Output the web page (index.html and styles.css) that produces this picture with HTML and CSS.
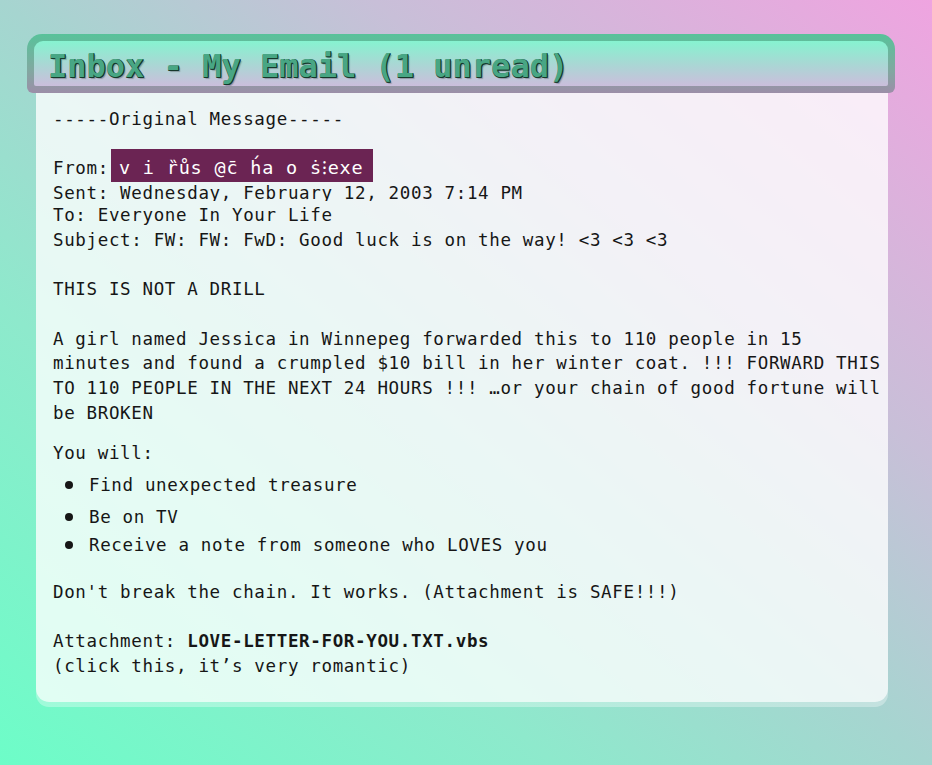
FILE: index.html
```html
<!DOCTYPE html>
<html lang="en">
<head>
<meta charset="utf-8">
<title>Inbox - My Email</title>
<link rel="stylesheet" href="styles.css">
</head>
<body>
<div class="window">
  <div class="titlebar">
    <div class="titlebar-inner">
      <h1 class="title">Inbox - My Email (1 unread)</h1>
    </div>
  </div>
  <div class="panel">
    <div class="line">-----Original Message-----</div>
    <div class="line blank"></div>
    <div class="line">From:<span class="sender">v i ȑůs @c̄ h́a o ṡ⁝exe</span></div>
    <div class="line sent">Sent: Wednesday, February 12, 2003 7:14 PM</div>
    <div class="line">To: Everyone In Your Life</div>
    <div class="line">Subject: FW: FW: FwD: Good luck is on the way! &lt;3 &lt;3 &lt;3</div>
    <div class="line blank"></div>
    <div class="line">THIS IS NOT A DRILL</div>
    <div class="line blank"></div>
    <p class="para">A girl named Jessica in Winnepeg forwarded this to 110 people in 15 minutes and found a crumpled $10 bill in her winter coat. !!! FORWARD THIS TO 110 PEOPLE IN THE NEXT 24 HOURS !!! …or your chain of good fortune will be BROKEN</p>
    <p class="para intro">You will:</p>
    <ul class="wishes">
      <li class="wish first">Find unexpected treasure</li>
      <li class="wish second">Be on TV</li>
      <li class="wish third">Receive a note from someone who LOVES you</li>
    </ul>
    <div class="line">Don't break the chain. It works. (Attachment is SAFE!!!)</div>
    <div class="line blank"></div>
    <div class="line">Attachment: <strong class="file">LOVE-LETTER-FOR-YOU.TXT.vbs</strong></div>
    <div class="line">(click this, it’s very romantic)</div>
  </div>
</div>
</body>
</html>
```

FILE: styles.css
```css
html, body {
  margin: 0;
  padding: 0;
}

body {
  width: 932px;
  height: 765px;
  overflow: hidden;
  background: linear-gradient(to top right, #6dfdc8 0%, #8ee9cc 30%, #a6d5d0 50%, #c8bfd8 70%, #efa4e0 100%);
  font-family: "DejaVu Sans Mono", monospace;
  color: #161616;
}

.window {
  margin: 34px 37px 0 27px;
  display: flex;
  flex-direction: column;
}

.titlebar {
  background: linear-gradient(to bottom, #58c29a 0%, #80a9a0 60%, #9c8ea8 100%);
  padding: 7px;
  border-radius: 15px 15px 6px 6px;
}

.titlebar-inner {
  background: linear-gradient(to bottom, #86f3d0 0%, #a8d8d4 50%, #cbbedc 100%);
  border-radius: 9px 9px 2px 2px;
  height: 45px;
  display: flex;
  align-items: center;
  padding: 0 14px;
}

.title {
  margin: 0;
  font-family: "DejaVu Sans Mono", monospace;
  font-weight: bold;
  font-size: 32px;
  line-height: 1;
  color: #48a684;
  text-shadow: 1px 1px 0 #15382b, 1px 0 0 #1d4a3a, 0 1px 0 #1d4a3a, 2px 2px 1px rgba(0, 0, 0, 0.25);
  position: relative;
  top: 2px;
}

.panel {
  margin: 0 7px 0 9px;
  padding: 14px 3px 23px 17px;
  background: rgba(255, 255, 255, 0.78);
  border-radius: 0 0 13px 13px;
  box-shadow: 0 5px 0 rgba(255, 255, 255, 0.32);
  font-size: 17.5px;
  letter-spacing: 0.65px;
  line-height: 24.7px;
}

.line {
  min-height: 24.7px;
  white-space: pre;
}

.line.sent {
  min-height: 0;
  height: 19.5px;
  overflow: hidden;
  margin-bottom: 2.6px;
}

.sender {
  background: #6b2453;
  color: #ffffff;
  font-size: 18.5px;
  letter-spacing: 0.8px;
  padding: 8px 9px 4px 8px;
  margin-left: 2px;
}

.para {
  margin: 0;
}

.intro {
  margin-top: 16px;
}

.wishes {
  margin: 0;
  padding-left: 36px;
  list-style: none;
}

.wish {
  position: relative;
}

.wish::before {
  content: "";
  position: absolute;
  left: -24px;
  top: 8px;
  width: 8px;
  height: 8px;
  border-radius: 50%;
  background: #161616;
}

.wish.first {
  margin-top: 7px;
}

.wish.second {
  margin-top: 7px;
}

.wish.third {
  margin-top: 3.5px;
  margin-bottom: 22px;
}

.file {
  font-weight: bold;
}
```
